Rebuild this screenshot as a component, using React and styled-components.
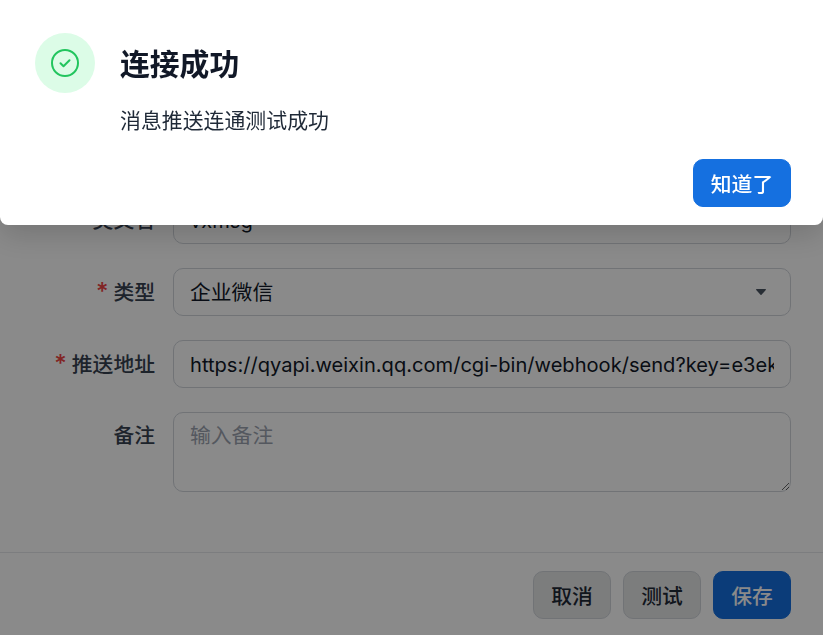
import React from 'react';
import styled, { createGlobalStyle } from 'styled-components';

const GlobalStyle = createGlobalStyle`
  html, body {
    margin: 0;
    height: 100%;
    overflow: hidden;
    background: #fff;
    font-family: Inter, "Noto Sans CJK SC", sans-serif;
  }
  * {
    box-sizing: border-box;
  }
`;

const Page = styled.div`
  width: 823px;
  height: 635px;
  display: flex;
  flex-direction: column;
  overflow: hidden;
`;

const Form = styled.div`
  flex: 1;
  padding: 196px 32px 0 0;
  display: flex;
  flex-direction: column;
  gap: 24px;
`;

const Row = styled.div`
  display: grid;
  grid-template-columns: 155px 1fr;
  column-gap: 18px;
  align-items: ${props => (props.top ? 'start' : 'center')};
`;

const Label = styled.label`
  height: 48px;
  font-size: 20.8px;
  font-weight: 500;
  line-height: ${props => (props.top ? 47 : 49)}px;
  color: #374151;
  text-align: right;
  white-space: nowrap;
`;

const Star = styled.span`
  font-size: 24px;
  line-height: 0;
  color: #ef4444;
  margin-right: 5px;
`;

const Input = styled.input`
  width: 100%;
  height: 48px;
  padding: 1px 16px 0;
  font: inherit;
  font-size: 20.1px;
  color: #111827;
  background: #fff;
  border: 1px solid #d1d5db;
  border-radius: 10px;
  outline: none;
`;

const SelectBox = styled.div`
  height: 48px;
  padding: 0 24px 2px 16px;
  font-size: 20.8px;
  color: #111827;
  border: 1px solid #d1d5db;
  border-radius: 10px;
  display: flex;
  align-items: center;
  justify-content: space-between;
`;

const Caret = styled.svg`
  width: 10px;
  height: 6px;
  margin-top: 2px;
  fill: #4b5563;
`;

const Textarea = styled.textarea`
  display: block;
  width: 100%;
  height: 80px;
  padding: 9px 16px;
  font: inherit;
  font-size: 20.8px;
  line-height: 28px;
  color: #111827;
  background: #fff;
  border: 1px solid #d1d5db;
  border-radius: 10px;
  outline: none;
  &::placeholder {
    color: #9ca3af;
    opacity: 1;
  }
`;

const Footer = styled.div`
  height: 83px;
  padding: 18px 32px 0;
  border-top: 1px solid #e5e7eb;
  display: flex;
  justify-content: flex-end;
  gap: 12px;
`;

const Button = styled.button`
  width: ${props => props.width || 78}px;
  height: 48px;
  padding: 0;
  font: inherit;
  font-size: 20.8px;
  font-weight: 500;
  border-radius: 10px;
  color: ${props => (props.primary ? '#fff' : '#1f2937')};
  background: ${props => (props.primary ? '#1570e0' : '#e5e7e8')};
  border: 1px solid ${props => (props.primary ? '#1570e0' : '#d1d5db')};
`;

const Overlay = styled.div`
  position: fixed;
  inset: 0;
  background: rgba(0, 0, 0, 0.46);
`;

const Dialog = styled.div`
  position: fixed;
  top: 0;
  left: 0;
  right: 0;
  height: 225px;
  padding: 33px 32px 18px 35px;
  background: #fff;
  border-radius: 0 0 8px 8px;
  box-shadow: 0 10px 30px rgba(0, 0, 0, 0.16);
  display: flex;
  flex-direction: column;
`;

const DialogBody = styled.div`
  flex: 1;
  display: flex;
  gap: 25px;
`;

const IconCircle = styled.div`
  width: 60px;
  height: 60px;
  border-radius: 50%;
  background: #dcfce7;
  display: flex;
  align-items: center;
  justify-content: center;
`;

const Title = styled.h2`
  margin: 11px 0 0;
  font-size: 29.8px;
  font-weight: 600;
  line-height: 40px;
  color: #111827;
`;

const Message = styled.p`
  margin: 21px 0 0;
  font-size: 20.9px;
  line-height: 32px;
  color: #1f2937;
`;

const DialogActions = styled.div`
  display: flex;
  justify-content: flex-end;
`;

const App = () => (
  <Page>
    <GlobalStyle />
    <Form>
      <Row>
        <Label>英文名</Label>
        <Input defaultValue="vxmsg" readOnly />
      </Row>
      <Row>
        <Label><Star>*</Star>类型</Label>
        <SelectBox>
          企业微信
          <Caret viewBox="0 0 10 6"><path d="M.7 0h8.6c.6 0 .9.7.5 1.1L5.5 5.7c-.3.3-.7.3-1 0L.2 1.1C-.2.7.1 0 .7 0z" /></Caret>
        </SelectBox>
      </Row>
      <Row>
        <Label><Star>*</Star>推送地址</Label>
        <Input defaultValue="https://qyapi.weixin.qq.com/cgi-bin/webhook/send?key=e3ek7c2a-41d6" readOnly />
      </Row>
      <Row top>
        <Label top>备注</Label>
        <Textarea placeholder="输入备注" />
      </Row>
    </Form>
    <Footer>
      <Button>取消</Button>
      <Button>测试</Button>
      <Button primary>保存</Button>
    </Footer>
    <Overlay />
    <Dialog>
      <DialogBody>
        <IconCircle>
          <svg width="32" height="32" viewBox="0 0 32 32" fill="none" stroke="#22c55e" strokeWidth="2" strokeLinecap="round" strokeLinejoin="round">
            <circle cx="16" cy="16" r="13" />
            <path d="M11.5 16.3l3 2.9 6-6" />
          </svg>
        </IconCircle>
        <div>
          <Title>连接成功</Title>
          <Message>消息推送连通测试成功</Message>
        </div>
      </DialogBody>
      <DialogActions>
        <Button primary width={98}>知道了</Button>
      </DialogActions>
    </Dialog>
  </Page>
);

export default App;
